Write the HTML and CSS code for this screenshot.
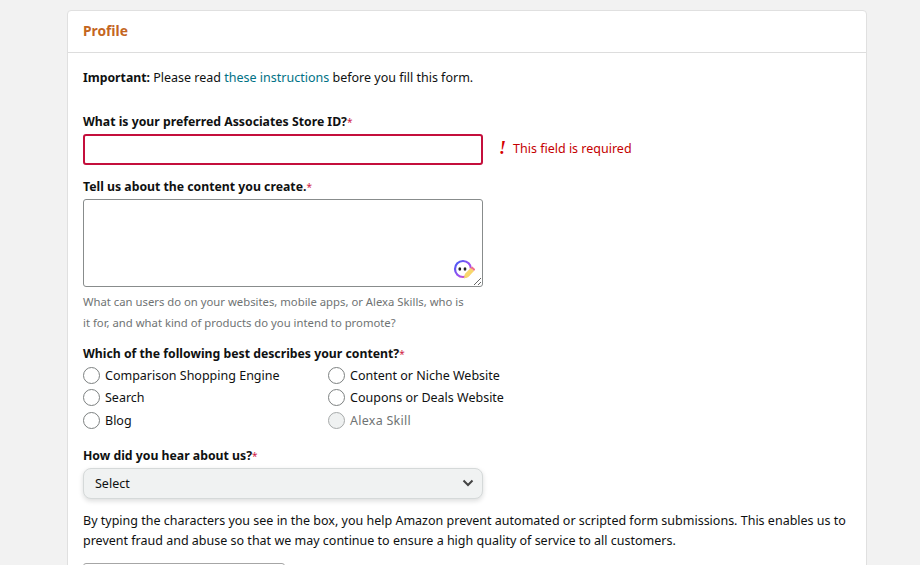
FILE: index.html
```html
<!DOCTYPE html>
<html lang="en">
<head>
<meta charset="utf-8">
<title>Profile</title>
<link rel="stylesheet" href="styles.css">
</head>
<body>
<main class="page">
  <section class="card">
    <header class="card-head"><h1>Profile</h1></header>
    <form class="card-body">
      <p class="intro"><b class="strong">Important:</b> Please read <a href="#">these instructions</a> before you fill this form.</p>

      <label class="label label-store">What is your preferred Associates Store ID?<i>*</i></label>
      <div class="field-row">
        <input class="input input-error" type="text">
        <div class="error"><span class="bang">!</span><span>This field is required</span></div>
      </div>

      <label class="label label-content">Tell us about the content you create.<i>*</i></label>
      <div class="area-wrap">
        <textarea class="area"></textarea>
        <svg class="bot" width="22" height="22" viewBox="0 0 22 22" aria-hidden="true">
          <defs><linearGradient id="ring" x1="0" y1="0" x2="1" y2="1"><stop offset="0" stop-color="#3f5cf5"/><stop offset="0.6" stop-color="#a04ff0"/><stop offset="1" stop-color="#f0609a"/></linearGradient></defs>
          <circle cx="10" cy="10" r="8" fill="#fff" stroke="url(#ring)" stroke-width="2.2"/>
          <ellipse cx="6.8" cy="10" rx="1.4" ry="1.8" fill="#222"/>
          <ellipse cx="12" cy="10" rx="1.4" ry="1.8" fill="#222"/>
          <path d="M11 19.5l.8-4.4 6-6.3 3.2 3.2-6 6.3z" fill="#f8d76c"/>
          <path d="M17.8 8.8l1.5-1.4 3 3-1.3 1.6z" fill="#f2708c"/>
        </svg>
      </div>
      <p class="hint">What can users do on your websites, mobile apps, or Alexa Skills, who is<br>it for, and what kind of products do you intend to promote?</p>

      <label class="label label-radio">Which of the following best describes your content?<i>*</i></label>
      <div class="radios">
        <label class="radio r1"><input type="radio" name="kind"><span>Comparison Shopping Engine</span></label>
        <label class="radio r1"><input type="radio" name="kind"><span>Content or Niche Website</span></label>
        <label class="radio r2"><input type="radio" name="kind"><span>Search</span></label>
        <label class="radio r2"><input type="radio" name="kind"><span>Coupons or Deals Website</span></label>
        <label class="radio"><input type="radio" name="kind"><span>Blog</span></label>
        <label class="radio disabled"><input type="radio" name="kind" disabled><span>Alexa Skill</span></label>
      </div>

      <label class="label label-hear">How did you hear about us?<i>*</i></label>
      <div class="select"><span>Select</span>
        <svg width="12" height="8" viewBox="0 0 12 8" aria-hidden="true"><path d="M1.5 1.5L6 6l4.5-4.5" fill="none" stroke="#444" stroke-width="2"/></svg>
      </div>
      <p class="captcha">By typing the characters you see in the box, you help Amazon prevent automated or scripted form submissions. This enables us to prevent fraud and abuse so that we may continue to ensure a high quality of service to all customers.</p>
      <div class="captcha-box"></div>
    </form>
  </section>
</main>
</body>
</html>
```
FILE: styles.css
```css
* { box-sizing: border-box; }
html, body { margin: 0; height: 100%; overflow: hidden; }
body { background: #f2f2f2; color: #0f1111; font: 12.5px/19px "Noto Sans", "Liberation Sans", sans-serif; }
.page { padding: 10px 0 0 67px; }
.card { width: 800px; background: #fff; border: 1px solid #e0e0e0; border-radius: 4px; }
.card-head { height: 42px; padding: 0 15px 2px; display: flex; align-items: center; border-bottom: 1px solid #ddd; }
h1 { margin: 0; font-size: 13.8px; line-height: 19px; font-weight: 700; color: #c4661f; }
.card-body { padding: 15px 15px 20px; }
p { margin: 0; }
.intro { margin-bottom: 25px; }
.strong { font-size: 12.25px; }
a { color: #007185; text-decoration: none; }
.label { display: block; font-weight: 700; font-size: 12.25px; }
.label i { color: #d01c45; font-style: normal; font-weight: 400; font-size: 10px; line-height: 0; }
.field-row { display: flex; align-items: center; margin-top: 3px; }
.input { width: 400px; height: 31px; background: #fff; border: 2px solid #c40f3c; border-radius: 3px; outline: none; }
.error { display: flex; align-items: center; gap: 9px; margin-left: 16px; margin-top: -2px; color: #c40000; }
.bang { font: italic 700 18px/19px "Liberation Serif", serif; width: 5px; color: #d50000; }
.label-content { margin-top: 12px; }
.area-wrap { position: relative; width: 400px; margin-top: 3px; height: 88px; }
.area { display: block; width: 400px; height: 88px; border: 1px solid #888c8c; border-radius: 3px; resize: both; background: #fff; }
.bot { position: absolute; right: 8px; bottom: 6px; }
.hint { margin-top: 4px; font-size: 11.3px; line-height: 21px; color: #6f7373; }
.label-radio { margin-top: 11px; }
.radios { display: grid; grid-template-columns: 245px 1fr; width: 450px; margin-top: 1px; }
.radio { display: flex; align-items: center; gap: 5px; height: 22.5px; }
.radio input { appearance: none; width: 17px; height: 17px; margin: 0; border: 1px solid #7d8181; border-radius: 50%; background: #fff; }
.disabled { color: #6f7373; letter-spacing: .25px; }
.disabled input { background: #eff1f1; border-color: #a6a9a9; }
.label-hear { margin-top: 14px; }
.select { display: flex; justify-content: space-between; align-items: center; width: 400px; height: 31px; margin-top: 3px; padding: 0 8px 0 11px; background: #f0f2f2; border: 1px solid #d5d9d9; border-radius: 8px; box-shadow: 0 2px 5px rgba(15,17,17,.15); }
.captcha { margin-top: 12px; line-height: 20px; }
.captcha-box { width: 202px; height: 60px; margin-top: 12px; border: 1px solid #a6a6a6; border-radius: 3px; }
```
